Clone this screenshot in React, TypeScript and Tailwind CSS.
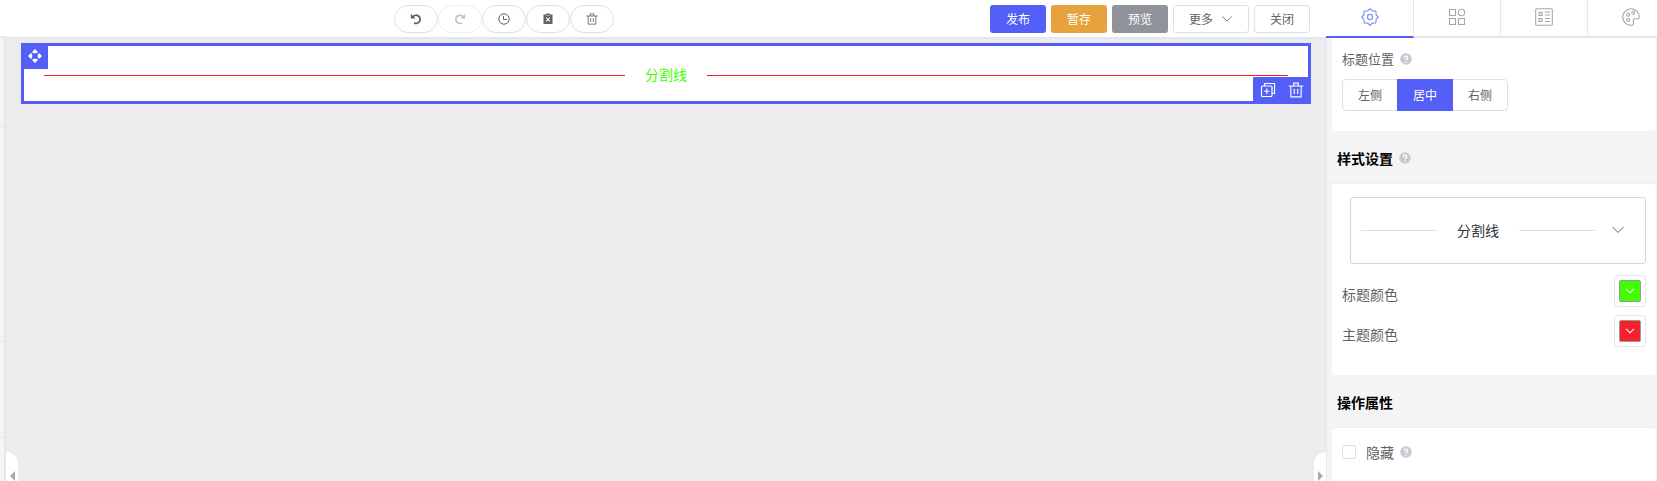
import React, { useState } from 'react';

const Chevron: React.FC<{ className?: string }> = ({ className }) => (
  <svg viewBox="0 0 14 14" className={className} fill="none" stroke="currentColor">
    <path d="M1.5 4 7 9.5 12.5 4" />
  </svg>
);

const HelpIcon: React.FC = () => (
  <svg viewBox="0 0 12 12" className="h-3 w-3 text-[#c8c9d2]" aria-hidden="true">
    <circle cx="6" cy="6" r="5.8" fill="currentColor" />
    <path d="M4.2 4.8c0-2.3 3.6-2.3 3.6 0C7.8 5.9 6 5.9 6 7.3" fill="none" stroke="#fff" strokeWidth="1.3" />
    <circle cx="6" cy="9" r=".8" fill="#fff" />
  </svg>
);

const TrashIcon: React.FC<{ className?: string }> = ({ className }) => (
  <svg viewBox="0 0 14 14" className={className} fill="none" stroke="currentColor">
    <path d="M.5 3.500h13M5 3.500V1h4v2.500M2.500 3.500v9.500h9V3.500M5.500 6v4.500M8.500 6v4.500" />
  </svg>
);

const UndoIcon: React.FC<{ className?: string }> = ({ className }) => (
  <svg viewBox="0 0 12 12" className={className}>
    <path d="M3 3.8A4 4 0 1 1 4.200 9.800" fill="none" stroke="currentColor" strokeWidth="1.9" />
    <path d="M.8.8v4.700h4.700z" fill="currentColor" />
  </svg>
);

const ClockIcon: React.FC = () => (
  <svg viewBox="0 0 12 12" className="h-3 w-3" fill="none" stroke="currentColor">
    <circle cx="6" cy="6" r="5.2" />
    <path d="M5.500 2.800v3.700h3.500" />
  </svg>
);

const ClearIcon: React.FC = () => (
  <svg viewBox="0 0 12 12" className="h-3 w-3">
    <path d="M1.500 1.500h2.700V.5h3.600v1h2.700V11h-9z" fill="currentColor" />
    <path d="M4.200 4.700l3.600 3.600M7.800 4.700L4.200 8.300" stroke="#fff" strokeWidth="1.1" />
    <path d="M4.200 2.500h3.600" stroke="#b5b6b9" strokeWidth=".8" />
  </svg>
);

const MoveIcon: React.FC = () => (
  <svg viewBox="0 0 16 16" className="h-4 w-4" fill="currentColor">
    <path d="M8 1 11 4 9.500 5.200h-3L5 4zM8 15 5 12l1.500-1.200h3L11 12zM1 8l3-3 1.200 1.500v3L4 11zM15 8l-3 3-1.200-1.500v-3L12 5z" />
  </svg>
);

const CopyIcon: React.FC = () => (
  <svg viewBox="0 0 16 16" className="h-4 w-4" fill="none" stroke="currentColor" strokeWidth="1.2">
    <rect x="1.5" y="4" width="10.5" height="10.5" rx="1" />
    <path d="M4.500 4V1.500h10v10H12M6.750 6.500v5.500M4 9.250h5.500" />
  </svg>
);

const GearIcon: React.FC = () => (
  <svg viewBox="0 0 18 18" className="h-[18px] w-[18px]" fill="none" stroke="currentColor" strokeWidth="1.2">
    <path
      d="M9 .8 11.200 2.800 14.800 3.200 15.200 6.800 17.200 9 15.200 11.200 14.800 14.800 11.200 15.200 9 17.200 6.800 15.200 3.200 14.800 2.800 11.200.8 9 2.800 6.800 3.200 3.200 6.800 2.800z"
      strokeLinejoin="round"
    />
    <circle cx="9" cy="9" r="2.6" />
  </svg>
);

const GridIcon: React.FC = () => (
  <svg viewBox="0 0 18 18" className="h-[18px] w-[18px]" fill="none" stroke="currentColor" strokeWidth="1.1">
    <rect x="1.5" y="1.5" width="6" height="6" />
    <circle cx="13.5" cy="4.5" r="3.2" />
    <rect x="1.5" y="10.5" width="6" height="6" />
    <rect x="10.5" y="10.5" width="6" height="6" />
  </svg>
);

const FormIcon: React.FC = () => (
  <svg viewBox="0 0 18 18" className="h-[18px] w-[18px]" fill="none" stroke="currentColor" strokeWidth="1.1">
    <rect x=".7" y=".7" width="16.6" height="16.6" rx="1" />
    <rect x="4" y="4.5" width="3" height="3" />
    <rect x="4" y="10.5" width="3" height="3" />
    <path d="M10 4h5M10 7h5M10 10.500h5M10 13.500h5" />
  </svg>
);

const PaletteIcon: React.FC = () => (
  <svg viewBox="0 0 18 18" className="h-[18px] w-[18px]" fill="none" stroke="currentColor" strokeWidth="1.1">
    <path d="M9 17.300A8.300 8.300 0 1 1 17.300 8.500c0 2-1.300 2.500-3 2.300-2.500-.3-3.500.7-3 2.700.5 2 .2 3.800-2.300 3.800z" />
    <circle cx="6.3" cy="6.7" r="1.5" />
    <circle cx="11.3" cy="4.8" r="1.5" />
    <circle cx="6.3" cy="12" r="1.5" />
  </svg>
);

const tools = [
  { label: '撤销', icon: <UndoIcon className="h-3 w-3" /> },
  { label: '重做', icon: <UndoIcon className="h-3 w-3 -scale-x-100" />, disabled: true },
  { label: '历史', icon: <ClockIcon /> },
  { label: '清除', icon: <ClearIcon /> },
  { label: '删除', icon: <TrashIcon className="h-3 w-3" /> }
];

const tabs = [
  { label: '组件属性', icon: <GearIcon /> },
  { label: '组件库', icon: <GridIcon /> },
  { label: '表单属性', icon: <FormIcon /> },
  { label: '主题', icon: <PaletteIcon /> }
];

const positions = ['左侧', '居中', '右侧'];

const Toolbar: React.FC = () => (
  <header className="flex h-[39px] shrink-0 items-start border-b-2 border-[#e4e7ed] bg-white pt-[5px] pr-4 text-xs">
    <div className="flex flex-1 justify-center pl-3">
      {tools.map((tool) => (
        <button
          key={tool.label}
          aria-label={tool.label}
          disabled={tool.disabled}
          className="flex h-7 w-11 items-center justify-center rounded-full border border-[#dcdfe6] text-[#606266] disabled:border-[#ebeef5] disabled:text-[#c0c4cc]"
        >
          {tool.icon}
        </button>
      ))}
    </div>
    <div className="flex gap-[5px]">
      <button className="h-7 w-14 rounded-[3px] bg-[#535ff6] text-white">发布</button>
      <button className="h-7 w-14 rounded-[3px] bg-[#e6a23c] text-white">暂存</button>
      <button className="h-7 w-14 rounded-[3px] bg-[#909399] text-white">预览</button>
      <button className="flex h-7 w-[76px] items-center justify-center gap-2 rounded-[3px] border border-[#dcdfe6] text-[#606266]">
        更多
        <Chevron className="h-3 w-3" />
      </button>
      <button className="h-7 w-14 rounded-[3px] border border-[#dcdfe6] text-[#606266]">关闭</button>
    </div>
  </header>
);

const DividerWidget: React.FC = () => (
  <div className="relative mx-[15px] mt-1 border-[3px] border-[#535ff6] bg-white px-5 pt-[17px] pb-[13px]">
    <div className="flex h-[25px] items-center text-sm text-[#40ff00]">
      <span className="h-px flex-1 bg-[#f5222d]" />
      <span className="px-5 pb-1">分割线</span>
      <span className="h-px flex-1 bg-[#f5222d]" />
    </div>
    <button aria-label="移动" className="absolute -top-[3px] -left-[3px] flex h-[26px] w-[27px] items-center justify-center bg-[#535ff6] text-white">
      <MoveIcon />
    </button>
    <div className="absolute -right-[3px] -bottom-[3px] flex h-[27px] w-[58px] items-center justify-between bg-[#535ff6] px-[7px] pb-px text-white">
      <button aria-label="复制">
        <CopyIcon />
      </button>
      <button aria-label="删除">
        <TrashIcon className="h-4 w-4" />
      </button>
    </div>
  </div>
);

const SectionTitle: React.FC<{ title: string; help?: boolean }> = ({ title, help }) => (
  <h3 className="flex h-[53px] items-center gap-[6px] border-b border-[#ebeef5] pt-[2px] pl-[10px] text-sm font-bold text-black">
    {title}
    {help && <HelpIcon />}
  </h3>
);

const ColorRow: React.FC<{ label: string; color: string }> = ({ label, color }) => (
  <div className="flex h-10 items-start justify-between text-sm">
    <span className="pt-[9px]">{label}</span>
    <button aria-label={label} className="h-8 w-8 rounded border border-[#e6e6e6] p-1">
      <span
        className="flex h-full w-full items-center justify-center rounded-xs border border-[#999] text-white"
        style={{ backgroundColor: color }}
      >
        <Chevron className="h-[10px] w-[10px] stroke-[1.5]" />
      </span>
    </button>
  </div>
);

const SettingsPanel: React.FC = () => {
  const [position, setPosition] = useState('居中');
  const [tab, setTab] = useState('组件属性');

  return (
    <aside className="flex w-[331px] shrink-0 flex-col overflow-hidden bg-[#f4f4f5] text-[#606266]">
      <nav className="flex h-[38px] shrink-0 overflow-hidden bg-white">
        {tabs.map((item) => (
          <button
            key={item.label}
            aria-label={item.label}
            onClick={() => setTab(item.label)}
            className={`flex w-[88px] shrink-0 items-center justify-center border-r border-b-2 border-[#e4e7ed] pb-[2px] not-first:w-[87px] ${
              tab === item.label ? 'border-b-[#535ff6] text-[#8790f5]' : 'text-[#a5a6aa]'
            }`}
          >
            {item.icon}
          </button>
        ))}
      </nav>

      <div className="flex-1 overflow-hidden border-l border-[#e4e7ed]">
        <section className="mr-px ml-[5px] rounded-b bg-white px-[10px] pt-[11px] pb-5">
          <div className="flex items-center gap-[6px] text-[13px] leading-5">
            标题位置
            <HelpIcon />
          </div>
          <div className="mt-[10px] flex text-xs">
            {positions.map((item) => (
              <button
                key={item}
                onClick={() => setPosition(item)}
                className={`-ml-px h-8 w-14 border first:ml-0 first:rounded-l last:rounded-r ${
                  position === item ? 'z-10 border-[#535ff6] bg-[#535ff6] text-white' : 'border-[#dcdfe6]'
                }`}
              >
                {item}
              </button>
            ))}
          </div>
        </section>

        {/* Style */}
        <SectionTitle title="样式设置" help />
        <section className="mr-px ml-[5px] rounded bg-white px-[10px] pt-[13px] pb-5">
          <button className="ml-2 flex h-[67px] w-[296px] items-center rounded-[3px] border border-[#d5d5d5] pr-5 pl-[10px] text-sm text-[#303133]">
            <span className="h-px flex-1 bg-[#dcdfe6]" />
            <span className="px-5 pb-[2px]">分割线</span>
            <span className="h-px flex-1 bg-[#dcdfe6]" />
            <span className="pb-[2px] pl-4">
              <Chevron className="h-[14px] w-[14px] text-[#606266]" />
            </span>
          </button>
          <div className="pt-[11px]">
            <ColorRow label="标题颜色" color="#40ff00" />
            <ColorRow label="主题颜色" color="#f5222d" />
          </div>
        </section>

        {/* Behaviour */}
        <SectionTitle title="操作属性" />
        <section className="mr-px ml-[5px] rounded-t bg-white px-[10px] pt-[14px] pb-10">
          <div className="flex items-center text-sm">
            <label className="flex items-center gap-[10px]">
              <input
                type="checkbox"
                className="h-[14px] w-[14px] appearance-none rounded-xs border border-[#dcdfe6] bg-white checked:bg-[#535ff6]"
              />
              隐藏
            </label>
            <span className="ml-[6px]">
              <HelpIcon />
            </span>
          </div>
        </section>
      </div>
    </aside>
  );
};

const App: React.FC = () => (
  <div className="flex h-screen overflow-hidden bg-[#ececec] font-['Noto_Sans_CJK_SC',sans-serif]">
    {/* Edge of the component list */}
    <aside className="flex w-[6px] shrink-0 flex-col">
      <div className="h-[38px] shrink-0 border-b-2 border-[#e4e7ed] bg-white" />
      <div className="flex flex-1 flex-col border-r-2 border-[#e4e7ed] bg-[#f4f4f5]">
        <div className="h-[89px] border-b border-[#e4e7ed]" />
        <div className="h-[215px] border-b border-[#e4e7ed]" />
        <div className="h-24 border-b border-[#e4e7ed]" />
      </div>
    </aside>

    <main className="relative flex min-w-0 flex-1 flex-col">
      <Toolbar />
      <DividerWidget />
      <button aria-label="收起左侧" className="absolute bottom-0 left-0 flex h-[29px] w-3 items-end justify-center rounded-tr-xl bg-white">
        <svg viewBox="0 0 5 10" className="h-[10px] w-[5px] text-[#a9abb2]">
          <path d="M5 0v10L0 5z" fill="currentColor" />
        </svg>
      </button>
      <button aria-label="收起右侧" className="absolute right-0 bottom-0 flex h-[29px] w-3 items-end justify-center rounded-tl-xl bg-white">
        <svg viewBox="0 0 5 10" className="h-[10px] w-[5px] text-[#a9abb2]">
          <path d="M0 0v10l5-5z" fill="currentColor" />
        </svg>
      </button>
    </main>

    <SettingsPanel />
  </div>
);

export default App;
